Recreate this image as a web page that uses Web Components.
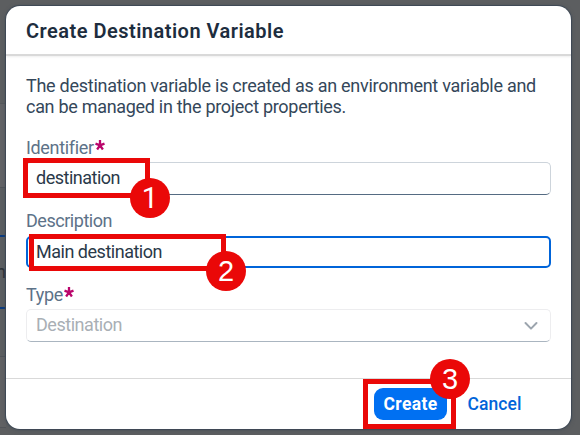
<!DOCTYPE html>
<html lang="en"><head><meta charset="utf-8"><title>Create Destination Variable</title>
<style>
html,body{margin:0;width:580px;height:435px;overflow:hidden;font-family:Roboto,"Liberation Sans",sans-serif}
</style></head><body>
<app-page>
<app-backdrop slot="backdrop"></app-backdrop>
<variable-dialog>
<fit-text slot="title" width="258">Create Destination Variable</fit-text>
<fit-text slot="intro" width="510">The destination variable is created as an environment variable and</fit-text>
<fit-text slot="intro" width="320">can be managed in the project properties.</fit-text>
<form-field label="Identifier" label-width="67" required><fit-text width="84">destination</fit-text></form-field>
<form-field label="Description" label-width="86" state="focus"><fit-text width="126">Main destination</fit-text></form-field>
<form-field label="Type" label-width="37" required state="disabled"><fit-text width="86">Destination</fit-text></form-field>
<dialog-button slot="actions" kind="primary"><fit-text width="54">Create</fit-text></dialog-button>
<dialog-button slot="actions"><fit-text width="54">Cancel</fit-text></dialog-button>
</variable-dialog>
<step-mark slot="marks" class="one" style="left:23px;top:158px;width:127px;height:40px">1</step-mark>
<step-mark slot="marks" style="left:29px;top:234px;width:197px;height:37px">2</step-mark>
<step-mark slot="marks" class="top" style="left:363px;top:379px;width:93px;height:50px">3</step-mark>
</app-page>
<script>
const define=(name,html,ready)=>customElements.define(name,class extends HTMLElement{
  connectedCallback(){
    if(this.shadowRoot)return;
    const t=document.createElement('template');t.innerHTML=html;
    this.attachShadow({mode:'open'}).append(t.content.cloneNode(true));
    if(ready)ready(this,this.shadowRoot);
  }
});
define('app-page',`<style>:host{display:block;position:relative;width:580px;height:435px;box-sizing:border-box;padding:6px 9px 6px 6px;background:#5c5e60;overflow:hidden}</style><slot name="backdrop"></slot><slot></slot><slot name="marks"></slot>`);
define('app-backdrop',`<style>:host{position:absolute;inset:0}svg{display:block}</style>
<svg width="580" height="435"><rect width="580" height="435" fill="#5c5e60"/><path d="M0 103.5H6" stroke="#55585b"/><path d="M0 104H6V187H0z" fill="#626366"/><path d="M0 187.5H6" stroke="#505459"/><path d="M0 188H6V308H0z" fill="#5b5e61"/><path d="M0 236H6M0 308H6" stroke="#0b3c80" stroke-width="2"/><path d="M0 356.5H6M0 427.5H6" stroke="#515459"/><path d="M0 357H6V427H0z" fill="#606163"/><text x="-4" y="278" font-family="Roboto" font-size="18" fill="#2c3238">h</text></svg>`);
// Spreads a single line of text evenly over the given width.
define('fit-text',`<style>:host{display:block;white-space:nowrap}span{display:inline-block}</style><span><slot></slot></span>`,(h,r)=>{
  const s=r.querySelector('span');
  const fit=()=>{s.style.letterSpacing='0';s.style.letterSpacing=((+h.getAttribute('width')-s.getBoundingClientRect().width)/h.textContent.length)+'px'};
  h.fit=fit;
});
define('variable-dialog',`<style>
:host{position:relative;display:flex;flex-direction:column;box-sizing:border-box;width:565px;height:423px;border-radius:14px;background:#fff;color:#1d2d3e;overflow:hidden;box-shadow:0 0 1px 1px #3d4855,0 1px 4px #3d485580}
header{box-sizing:border-box;height:50px;border-bottom:2px solid #d9d9d9;padding:13px 20px;font:600 20px/24px Roboto,sans-serif;box-shadow:0 1px 2px #eee}
main{flex:1;padding:19px 20px 0;display:flex;flex-direction:column}
.intro{font-size:18px;line-height:21px;color:#34475a;padding-bottom:20px}
.fields{display:flex;flex-direction:column;gap:15px}
footer{display:flex;height:50px;box-sizing:content-box;border-top:1px solid #d9d9d9;padding-left:368px;gap:11px;align-items:flex-start}
</style><header><slot name="title"></slot></header><main><div class="intro"><slot name="intro"></slot></div><div class="fields"><slot></slot></div></main><footer><slot name="actions"></slot></footer>`);
define('form-field',`<style>
:host{display:block;height:58.5px;font-size:18px}
.label{display:flex;height:25px;line-height:21px;color:#5d7288;gap:1px}
:host([state=focus]) .label{line-height:19px}
svg{display:none;margin-top:3px}:host([required]) svg{display:block}
.box{display:flex;justify-content:space-between;align-items:center;box-sizing:border-box;width:525px;height:33px;padding:0 12px 2px 9px;border:1px solid #cdd4db;border-bottom-color:#556b82;border-radius:5px;color:#2a3949}
:host([state=focus]) .box{border:2px solid #0064d9;padding-left:8px;padding-bottom:0;height:32px}
:host([state=disabled]) .box{border-color:#ededef;border-bottom-color:#aab5c0;color:#a9afb5}
.chev{display:none;margin:2px 0 0}:host([state=disabled]) .chev{display:block}
</style><div class="label"><fit-text></fit-text><svg width="10" height="11" viewBox="0 0 10 11"><path d="M5 0V5.4M5 5.4L.5 3.7M5 5.4L9.5 3.7M5 5.4L2.1 9.5M5 5.4L7.9 9.5" stroke="#ba066c" stroke-width="2.3"/></svg></div><div class="box"><slot></slot><svg class="chev" width="14" height="10" viewBox="0 0 14 10"><path d="M1.5 2L7 7.6L12.5 2" fill="none" stroke="#9ca5ae" stroke-width="2" stroke-linecap="round" stroke-linejoin="round"/></svg></div>`,(h,r)=>{
  const l=r.querySelector('fit-text');l.textContent=h.getAttribute('label');l.setAttribute('width',h.getAttribute('label-width'));if(l.fit)l.fit();
  if(h.getAttribute('state')!=='disabled')r.querySelector('.chev').remove();
});
define('dialog-button',`<style>:host{display:flex;align-items:center;justify-content:center;box-sizing:border-box;width:73px;height:32px;margin-top:9px;border-radius:9px;font:500 17.5px/21px Roboto,sans-serif;color:#0064d9}:host([kind=primary]){background:#0070f2;color:#fff;font-weight:700}</style><slot></slot>`);
define('step-mark',`<style>:host{position:absolute;box-sizing:border-box;border:5px solid #ea0808}
b{position:absolute;right:-25px;bottom:-25px;width:40px;height:40px;border-radius:50%;background:#ea0808;color:#fff;font:400 29px/41px "Liberation Sans",sans-serif;text-align:center}
:host(.one) b{font-family:Roboto,sans-serif}
:host(.top) b{bottom:auto;top:-25px;right:-19px}</style><b><slot></slot></b>`);
const fitAll=root=>root.querySelectorAll('*').forEach(e=>{if(e.fit)e.fit();if(e.shadowRoot)fitAll(e.shadowRoot)});
fitAll(document);
</script></body></html>
